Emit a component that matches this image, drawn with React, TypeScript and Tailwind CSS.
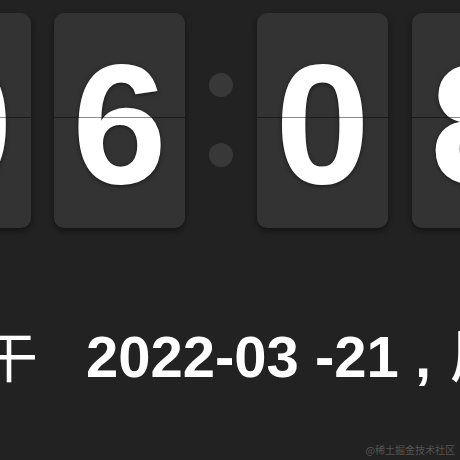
import React from "react";

function Card({ d }: { d: string }) {
  return (
    <div className="relative w-[131px] h-[215px] shrink-0 rounded-[10px] bg-[#333333] shadow-[0_3px_6px_rgba(0,0,0,0.45)] flex items-center justify-center pt-[7px]">
      <span className="font-['Liberation_Sans',Arial,sans-serif] font-bold text-[170px] leading-none text-white [text-shadow:0_1px_4px_rgba(0,0,0,0.55)]">
        {d}
      </span>
      <div className="absolute left-0 right-0 top-[104px] h-[1px] bg-[rgba(0,0,0,0.45)]" />
    </div>
  );
}

export default function App() {
  return (
    <div className="relative w-[460px] h-[460px] overflow-hidden bg-[#222222] flex flex-col">
      <div className="flex pt-[13px] ml-[-100px]">
        <Card d="0" />
        <div className="w-[23px] shrink-0" />
        <Card d="6" />
        <div className="w-[72px] shrink-0 flex flex-col items-center pt-[60px] gap-[46px]">
          <div className="w-[24px] h-[24px] rounded-full bg-[#383838]" />
          <div className="w-[24px] h-[24px] rounded-full bg-[#383838]" />
        </div>
        <Card d="0" />
        <div className="w-[24px] shrink-0" />
        <Card d="8" />
      </div>
      <div className="flex items-baseline mt-[95px] ml-[-78px] whitespace-pre text-white text-[58px] leading-none">
        <span className="font-['Noto_Sans_CJK_SC',sans-serif] font-normal">下午</span>
        <span className="ml-[48px] font-['Liberation_Sans',Arial,sans-serif] font-bold">2022-03 -21 , </span>
        <span className="ml-[3px] font-['Noto_Sans_CJK_SC',sans-serif] font-medium">周一</span>
      </div>
      <div className="absolute right-[5px] bottom-[5px] text-[10px] leading-none text-[#555555] font-['Noto_Sans_CJK_SC',sans-serif]">
        @稀土掘金技术社区
      </div>
    </div>
  );
}
